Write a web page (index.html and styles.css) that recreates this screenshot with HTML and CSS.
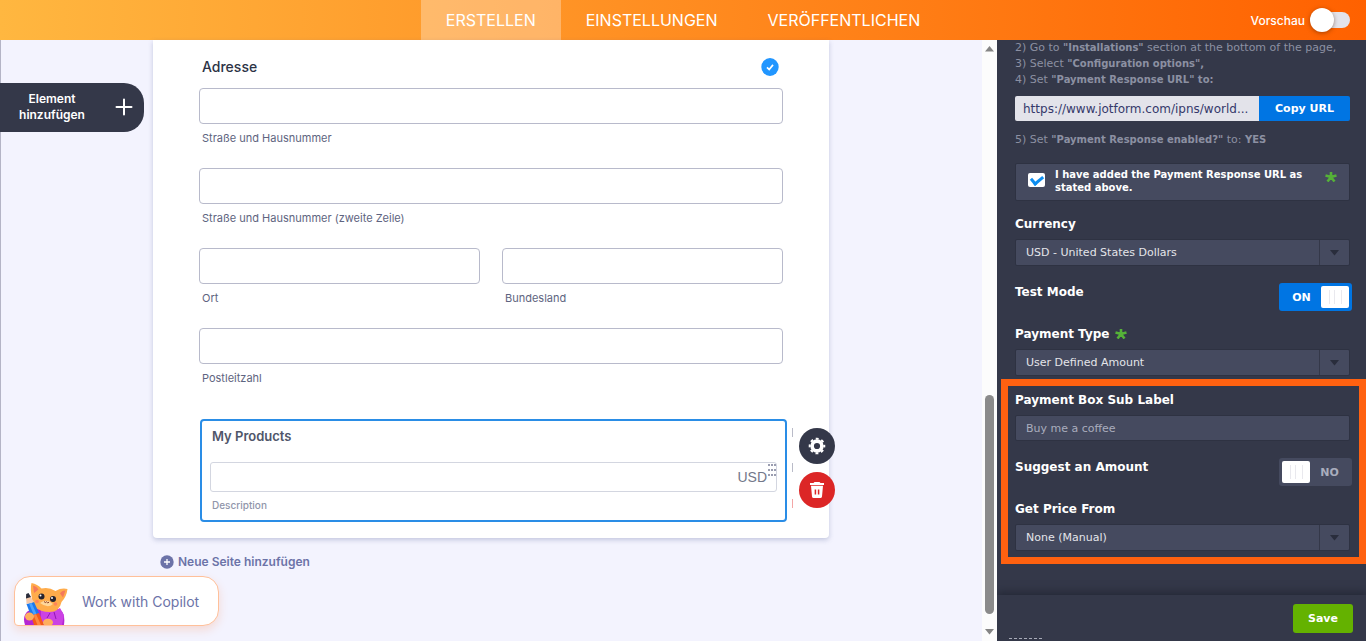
FILE: index.html
```html
<!DOCTYPE html>
<html lang="de">
<head>
<meta charset="utf-8">
<title>Formular erstellen</title>
<link rel="stylesheet" href="styles.css">
</head>
<body>
<header class="topbar">
  <nav class="tabs">
    <a class="tab tab-active" href="#erstellen">ERSTELLEN</a>
    <a class="tab" href="#einstellungen">EINSTELLUNGEN</a>
    <a class="tab" href="#veroeffentlichen">VERÖFFENTLICHEN</a>
  </nav>
  <label class="preview">Vorschau
    <input class="preview-input" type="checkbox" role="switch">
  </label>
</header>

<div class="workspace">
  <main class="canvas">
    <button class="add-element" type="button">
      <span class="add-text">Element hinzufügen</span>
      <svg width="18" height="18" viewBox="0 0 18 18" fill="none" stroke="#fff" stroke-width="2" stroke-linecap="round"><path d="M9 1.500v15M1.500 9h15"/></svg>
    </button>

    <form class="sheet">
      <div class="address-head">
        <h2 class="address-title">Adresse</h2>
        <svg width="18" height="18" viewBox="0 0 18 18"><ellipse cx="9" cy="9" rx="8.700" ry="9" fill="#2196ff"/><path d="M6 9.300l2.200 2.200 3.800-4.600" fill="none" stroke="#fff" stroke-width="1.700"/></svg>
      </div>
      <div class="address-grid">
        <div class="field field-wide">
          <input class="box" id="street" type="text">
          <label class="sub" for="street">Straße und Hausnummer</label>
        </div>
        <div class="field field-wide">
          <input class="box" id="street2" type="text">
          <label class="sub" for="street2">Straße und Hausnummer (zweite Zeile)</label>
        </div>
        <div class="field">
          <input class="box" id="city" type="text">
          <label class="sub" for="city">Ort</label>
        </div>
        <div class="field">
          <input class="box" id="state" type="text">
          <label class="sub" for="state">Bundesland</label>
        </div>
        <div class="field field-wide">
          <input class="box" id="zip" type="text">
          <label class="sub" for="zip">Postleitzahl</label>
        </div>
      </div>

      <section class="product">
        <h3 class="product-title">My Products</h3>
        <div class="amount">
          <input class="amount-input" id="amount" type="text">
          <span class="amount-unit">USD</span>
          <svg class="grip" width="10" height="12" viewBox="0 0 10 12" fill="#9a9db0"><path d="M1 0h2v2H1zM4 0h2v2H4zM7 0h2v2H7zM1 5h2v2H1zM4 5h2v2H4zM7 5h2v2H7zM1 10h2v2H1zM4 10h2v2H4zM7 10h2v2H7z"/></svg>
        </div>
        <label class="product-sub" for="amount">Description</label>
        <div class="tools">
          <button class="tool" type="button" aria-label="Eigenschaften">
            <svg width="18" height="18" viewBox="0 0 18 18" fill="none" stroke="#fff"><circle cx="9" cy="9" r="4.900" stroke-width="3.600"/><circle cx="9" cy="9" r="7.300" stroke-width="2" stroke-dasharray="2.900 2.830" stroke-dashoffset="1.450"/></svg>
          </button>
          <button class="tool tool-delete" type="button" aria-label="Löschen">
            <svg width="16" height="18" viewBox="0 0 16 18"><path fill="#fff" d="M1 2h3.500L5.500 1h5l1 1H15v2H1zM2 4.800h12l-1 10.700q-.2 1.500-1.700 1.500H4.700Q3.200 17 3 15.500z"/><path d="M6.400 8.500v5M9.600 8.500v5" stroke="#dc2626" stroke-width="1.500"/></svg>
          </button>
          <i class="tick tick-one"></i><i class="tick tick-two"></i><i class="tick tick-three"></i>
        </div>
      </section>
    </form>

    <div class="new-page">
      <button class="new-page-button" type="button">
        <svg width="14" height="14" viewBox="0 0 14 14"><circle cx="7" cy="7" r="6.700" fill="#6c73a8"/><path d="M7 4v6M4 7h6" stroke="#fff" stroke-width="1.300"/></svg>
        Neue Seite hinzufügen
      </button>
    </div>

    <button class="copilot" type="button">
      <svg class="cat" width="46" height="43" viewBox="0 0 46 43">
        <path d="M2 43Q-1 34 5 29l10-3h18q10 2 8 17z" fill="#b526d3"/>
        <path d="M18 26q8 7 19 0l4 7-2 10H18z" fill="#cb42e4"/>
        <path d="M9 17Q7 6 8.500 1q6 1 10 5.500 7-2 14 2.500 6-3.500 12-2-1 8-6 13-2 10-12 10-9 0-15-5-3-3-2.500-8z" fill="#ffac4b"/>
        <path d="M10 3.500q4 1 5.500 4L11 11zM42.500 8.500q-4 0-5.500 3l3 4z" fill="#f4795b"/>
        <path d="M17 21q7-5 13 1-5 5-13-1z" fill="#ffd79b"/>
        <circle cx="18.500" cy="14.500" r="3" fill="#26232e"/><circle cx="30" cy="17" r="3" fill="#26232e"/>
        <circle cx="17.500" cy="13.500" r="1" fill="#fff"/><circle cx="29" cy="16" r="1" fill="#fff"/>
        <circle cx="14" cy="19.500" r="1.800" fill="#ff855a"/><circle cx="32.500" cy="22" r="1.800" fill="#ff855a"/>
        <path d="M21 19.500q1.500 2 2.500.3 1 1.700 2.500.5" fill="none" stroke="#8b3c25"/>
        <path d="M3.500 22l7.500-2 5 11-8 3z" fill="#1d79ee"/><path d="M6 21.400l2.500-.700 5 11.300-2.600 1z" fill="#4ba2ff"/>
        <path d="M8 34l8-3 5 12H11z" fill="#f45a19"/><path d="M10.500 33l2.500-1 5 11h-3.500z" fill="#ff873e"/>
        <path d="M3.500 22L3 14l3.500-1L11 20z" fill="#f6c9aa"/><path d="M3 16.500L3.200 12l2.300-1L8 15z" fill="#292c3b"/>
        <ellipse cx="6.500" cy="34.500" rx="4.500" ry="4" fill="#ffae5d"/><ellipse cx="25" cy="40.500" rx="5" ry="3.800" fill="#ffae5d"/>
        <path d="M27 31l-3 5M31 30l2 7" stroke="#9017b5"/>
      </svg>
      <span>Work with Copilot</span>
    </button>
  </main>

  <div class="scrollbar">
    <svg width="9" height="6" viewBox="0 0 9 6"><path d="M0 5.500L4.500 0 9 5.500z" fill="#858585"/></svg>
    <div class="track"><div class="thumb"></div></div>
    <svg width="9" height="6" viewBox="0 0 9 6"><path d="M0 0h9L4.500 5.500z" fill="#858585"/></svg>
  </div>

  <aside class="panel">
    <div class="panel-body">
      <div class="notes">
        <p class="note">2) Go to <b>"Installations"</b> section at the bottom of the page,</p>
        <p class="note">3) Select <b>"Configuration options",</b></p>
        <p class="note">4) Set <b>"Payment Response URL" to:</b></p>
      </div>
      <div class="url">
        <input class="url-input" type="text" readonly aria-label="Payment Response URL" value="https://www.jotform.com/ipns/world...">
        <button class="url-copy" type="button">Copy URL</button>
      </div>
      <p class="note note-last">5) Set <b>"Payment Response enabled?"</b> to: <b>YES</b></p>
      <label class="confirm">
        <input class="confirm-input" type="checkbox" checked>
        <span class="confirm-text">I have added the Payment Response URL as stated above.</span>
        <svg class="star" width="12" height="10" viewBox="0 0 12 10" stroke="#55b238" stroke-width="2.600"><path d="M6 0v5M.500 3.500L6 5l5.500-1.500M2.500 9.500L6 5l3.500 4.500" fill="none"/></svg>
      </label>

      <label class="caption" for="currency">Currency</label>
      <div class="choice">
        <select class="select" id="currency"><option>USD - United States Dollars</option></select>
        <span class="choice-arrow"><svg width="9" height="6" viewBox="0 0 9 6"><path d="M0 0h9L4.500 5.500z" fill="#292d3c"/></svg></span>
      </div>
      <div class="switch-row">
        <label class="switch-caption" for="test">Test Mode</label>
        <span class="switch switch-on">
          <input class="switch-input" id="test" type="checkbox" role="switch" checked>
          <span class="switch-word">ON</span><span class="knob"></span>
        </span>
      </div>
      <label class="caption" for="paytype">Payment Type
        <svg class="star" width="12" height="10" viewBox="0 0 12 10" stroke="#55b238" stroke-width="2.600"><path d="M6 0v5M.500 3.500L6 5l5.500-1.500M2.500 9.500L6 5l3.500 4.500" fill="none"/></svg>
      </label>
      <div class="choice">
        <select class="select" id="paytype"><option>User Defined Amount</option></select>
        <span class="choice-arrow"><svg width="9" height="6" viewBox="0 0 9 6"><path d="M0 0h9L4.500 5.500z" fill="#292d3c"/></svg></span>
      </div>
    </div>

    <section class="highlight">
      <label class="caption caption-first" for="sublabel">Payment Box Sub Label</label>
      <input class="text-input" id="sublabel" type="text" placeholder="Buy me a coffee">
      <div class="switch-row">
        <label class="switch-caption" for="suggest">Suggest an Amount</label>
        <span class="switch">
          <input class="switch-input" id="suggest" type="checkbox" role="switch">
          <span class="knob"></span><span class="switch-word">NO</span>
        </span>
      </div>
      <label class="caption" for="price">Get Price From</label>
      <div class="choice">
        <select class="select" id="price"><option>None (Manual)</option></select>
        <span class="choice-arrow"><svg width="9" height="6" viewBox="0 0 9 6"><path d="M0 0h9L4.500 5.500z" fill="#292d3c"/></svg></span>
      </div>
    </section>

    <footer class="panel-foot">
      <button class="save" type="button">Save</button>
      <div class="foot-edge"></div>
    </footer>
  </aside>
</div>
</body>
</html>
```

FILE: styles.css
```css
* { box-sizing: border-box; }
body {
  margin: 0;
  height: 100vh;
  display: flex;
  flex-direction: column;
  overflow: hidden;
  font-family: Inter, "Liberation Sans", sans-serif;
  color: #2c3345;
}
h2, h3, p { margin: 0; }
button, input, select { font: inherit; margin: 0; border: 0; }
button { cursor: pointer; }
svg { display: block; flex: none; }

/* Top bar */
.topbar {
  flex: none;
  height: 40px;
  display: grid;
  grid-template-columns: 1fr auto 1fr;
  background: linear-gradient(90deg, #ffb740, #ff6100);
}
.tabs { grid-column: 2; display: flex; }
.tab {
  display: flex;
  align-items: center;
  padding: 0 25px;
  font-size: 16px;
  line-height: 20px;
  color: #fff;
  text-decoration: none;
}
.tab-active { background: rgba(255, 255, 255, .3); }
.preview {
  justify-self: end;
  display: flex;
  align-items: center;
  gap: 8px;
  padding-right: 16px;
  font-size: 12px;
  font-weight: 500;
  color: #fff;
}
.preview-input {
  appearance: none;
  position: relative;
  width: 37px;
  height: 16px;
  border-radius: 8px;
  background: #e3e3ea;
}
.preview-input::before {
  content: "";
  position: absolute;
  left: -3px;
  top: -4px;
  width: 24px;
  height: 24px;
  border-radius: 50%;
  background: #fff;
  box-shadow: 0 1px 4px rgba(80, 30, 0, .5);
}

.workspace { flex: 1; min-height: 0; display: flex; }

/* Form canvas */
.canvas {
  position: relative;
  flex: 1;
  min-width: 0;
  background: #f3f3fe;
  box-shadow: inset 1px 0 #b4b4c6;
}
.sheet {
  max-width: 676px;
  margin: 0 auto;
  padding: 16px 46px;
  background: #fff;
  border-radius: 0 0 4px 4px;
  box-shadow: 0 2px 5px rgba(84, 95, 150, .3);
}
.address-head {
  display: flex;
  align-items: center;
  justify-content: space-between;
  height: 21px;
  margin-bottom: 11px;
  padding: 0 4px 0 3px;
}
.address-title { font-size: 14px; font-weight: 500; line-height: 20px; }
.address-grid { display: grid; grid-template-columns: 1fr 1fr; gap: 21px 22px; }
.field { display: flex; flex-direction: column; gap: 6px; min-width: 0; }
.field-wide { grid-column: 1 / -1; }
.box {
  width: 100%;
  height: 36px;
  padding: 0 10px;
  border: 1px solid #b8bacb;
  border-radius: 4px;
  background: #fff;
}
.sub { padding-left: 3px; font-size: 11px; line-height: 17px; color: #5e6480; }

/* Selected product field */
.product {
  position: relative;
  margin: 32px -4px 0 1px;
  padding: 7px 8px 8px 8px;
  border: 2px solid #2a8de6;
  border-radius: 4px;
}
.product-title { margin-bottom: 18px; padding-left: 2px; font-size: 13px; font-weight: 600; line-height: 16px; color: #50566a; }
.amount {
  position: relative;
  display: flex;
  align-items: center;
  height: 30px;
  padding-right: 9px;
  border: 1px solid #d3d6e0;
  border-radius: 3px;
}
.amount-input { flex: 1; min-width: 0; height: 26px; background: none; }
.amount-unit { font-family: "Liberation Sans", sans-serif; font-size: 14px; color: #73788a; }
.grip { position: absolute; right: -1px; top: 1px; }
.product-sub { display: block; margin-top: 6px; padding-left: 2px; font-size: 10px; font-weight: 500; line-height: 14px; color: #9095aa; }
.tools {
  position: absolute;
  left: calc(100% + 14px);
  top: 7px;
  display: flex;
  flex-direction: column;
  gap: 8px;
}
.tool {
  display: grid;
  place-items: center;
  width: 36px;
  height: 36px;
  padding: 0;
  border-radius: 50%;
  background: #343849;
}
.tool-delete { background: #dc2626; }
.tick { position: absolute; left: -7px; width: 1px; height: 9px; background: #b9bbc8; }
.tick-one { top: 0; }
.tick-two { top: 35px; }
.tick-three { top: 71px; background: #f3a6a6; }

.new-page { max-width: 676px; margin: 15px auto 0; padding-left: 7px; }
.new-page-button {
  display: flex;
  align-items: center;
  gap: 4px;
  padding: 0;
  background: none;
  font-size: 12px;
  font-weight: 600;
  line-height: 18px;
  color: #6c73a8;
}

.add-element {
  position: absolute;
  left: 0;
  top: 43px;
  display: flex;
  align-items: center;
  gap: 21px;
  width: 144px;
  height: 49px;
  padding: 0 11px 2px 10px;
  border-radius: 0 20px 20px 0;
  background: #343849;
  color: #fff;
}
.add-text { flex: 1; font-size: 12px; font-weight: 600; line-height: 16px; }
.copilot {
  position: absolute;
  left: 14px;
  bottom: 15px;
  display: flex;
  align-items: center;
  gap: 13px;
  width: 205px;
  height: 50px;
  padding: 0 8px;
  border: 1px solid #ffc09a;
  border-radius: 16px 16px 16px 4px;
  background: #fff;
  box-shadow: 0 4px 10px rgba(255, 120, 50, .2);
  font-size: 14px;
  color: #6c73a8;
}
.cat { align-self: flex-end; }

.scrollbar {
  flex: none;
  width: 15px;
  padding: 6px 0;
  display: flex;
  flex-direction: column;
  align-items: center;
  justify-content: space-between;
  background: #fcfcfc;
}
.track { flex: 1; display: flex; flex-direction: column; justify-content: flex-end; padding-bottom: 15px; }
.thumb { width: 9px; height: 39%; border-radius: 5px; background: #8b8b8b; }

/* Settings panel */
.panel {
  flex: none;
  width: 369px;
  display: flex;
  flex-direction: column;
  overflow: hidden;
  background: #343849;
  font-family: "DejaVu Sans", sans-serif;
  font-size: 11px;
  color: #fff;
}
.panel-body { padding: 0 16px 0 18px; }
.note { line-height: 16px; color: #8c90a2; white-space: nowrap; }
.note b { font-size: 10px; }
.note-last { margin: 11px 0 15px; }
.url { display: flex; height: 25px; margin-top: 8px; border-radius: 2px; overflow: hidden; }
.url-input { flex: 1; min-width: 0; padding: 0 8px; background: #e3e3ea; color: #35396a; font-size: 12px; }
.url-copy { flex: none; width: 91px; padding: 0; background: #0075e3; color: #fff; font-weight: 700; }
.confirm {
  display: flex;
  align-items: flex-start;
  gap: 10px;
  height: 38px;
  padding: 4px 12px;
  border: 1px solid #2e3242;
  border-radius: 2px;
  background: #454a5f;
  font-size: 10px;
  line-height: 13px;
}
.confirm-input {
  appearance: none;
  flex: none;
  display: grid;
  place-items: center;
  width: 17px;
  height: 14px;
  margin-top: 5px;
  border-radius: 2px;
  background: #fff;
}
.confirm-input:checked::before {
  content: "";
  width: 9px;
  height: 5px;
  margin-bottom: 3px;
  border-left: 3px solid #0d8df0;
  border-bottom: 3px solid #0d8df0;
  transform: rotate(-40deg);
}
.confirm-text { flex: 1; font-weight: 700; }
.confirm .star { margin-top: 4px; }

.caption {
  display: flex;
  align-items: center;
  gap: 6px;
  margin: 15px 0 7px;
  font-size: 12px;
  font-weight: 700;
  line-height: 16px;
}
.choice { position: relative; display: grid; height: 27px; }
.select, .text-input {
  appearance: none;
  width: 100%;
  padding: 0 10px;
  border: 1px solid #2e3242;
  border-radius: 2px;
  background: #454a5f;
  color: #e4e5ea;
}
.text-input { height: 26px; display: block; }
.text-input::placeholder { color: #a9adbd; opacity: 1; }
.choice-arrow {
  position: absolute;
  right: 1px;
  top: 1px;
  bottom: 1px;
  width: 30px;
  display: grid;
  place-items: center;
  border-left: 1px solid #343849;
  pointer-events: none;
}
.switch-row {
  display: flex;
  justify-content: space-between;
  align-items: flex-start;
  margin: 17px -2px 0 0;
}
.switch-caption { font-size: 12px; font-weight: 700; line-height: 18px; }
.switch {
  position: relative;
  display: flex;
  align-items: center;
  width: 73px;
  height: 28px;
  padding: 3px;
  border-radius: 3px;
  background: #454a5f;
  color: #a9adbd;
}
.switch-on { background: #0075e3; color: #fff; }
.switch-input { position: absolute; inset: 0; width: 100%; height: 100%; opacity: 0; cursor: pointer; }
.switch-word { flex: 1; text-align: center; font-weight: 700; }
.knob { width: 28px; height: 22px; display: grid; place-items: center; border-radius: 2px; background: #fff; }
.knob::before {
  content: "";
  width: 11px;
  height: 14px;
  border: solid #e9e9ee;
  border-width: 0 1px;
  background: linear-gradient(90deg, transparent 4px, #e9e9ee 4px, #e9e9ee 5px, transparent 5px);
}
.highlight {
  margin: 3px 0 0 4px;
  padding: 6px 9px 6px 7px;
  border: 7px solid #ff6110;
}
.caption-first { margin-top: 0; }
.panel-foot {
  flex: 1;
  display: flex;
  flex-direction: column;
  margin-top: 31px;
  padding: 9px 13px 2px 12px;
  box-shadow: 0 -3px 8px rgba(22, 25, 38, .5);
}
.save {
  align-self: flex-end;
  width: 60px;
  height: 29px;
  padding: 0;
  border-radius: 3px;
  background: #64b200;
  color: #fff;
  font-weight: 700;
}
.foot-edge {
  width: 34px;
  height: 1px;
  margin-top: auto;
  background: repeating-linear-gradient(90deg, #a8abb8 0 3px, #343849 3px 5px);
}
```
